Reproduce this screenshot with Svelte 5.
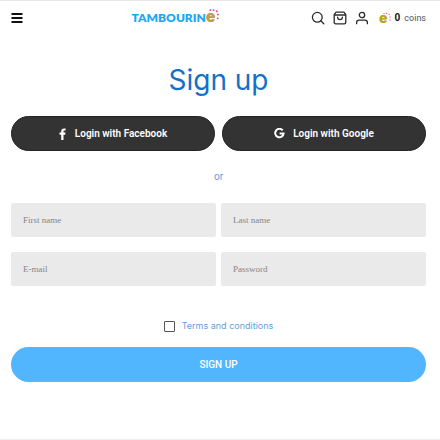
<script>
  let firstName = $state('');
  let lastName = $state('');
  let email = $state('');
  let password = $state('');
  let accepted = $state(false);
</script>

{#snippet dots()}
  <circle cx="1.4" cy="1.2" r="1" />
  <circle cx="5" cy="1.2" r="1" />
  <circle cx="8.6" cy="2.4" r="1" />
  <circle cx="9.8" cy="6" r="1" />
  <circle cx="9.6" cy="10.2" r="1" />
{/snippet}

<div class="page">
  <header>
    <button class="icon menu" aria-label="Menu">
      <svg width="12" height="12" viewBox="0 0 12 12" stroke="#111" stroke-width="2"><path d="M.5 2h11M.5 6h11M.5 10h11" /></svg>
    </button>
    <a class="logo" href="#home">
      <span>TAMBOURIN</span><span class="gold">e</span>
      <svg class="spark" width="10" height="11" viewBox="0 0 11 12" fill="#ef3e8b">{@render dots()}</svg>
    </a>
    <nav class="tools">
      <button class="icon" aria-label="Search">
        <svg width="14" height="14" viewBox="0 0 14 14" fill="none" stroke="#2b2b2b" stroke-width="1.3" stroke-linecap="round"><circle cx="6.3" cy="6.3" r="4.9" /><path d="m10 10 2.8 2.8" /></svg>
      </button>
      <button class="icon" aria-label="Bag">
        <svg width="14" height="14" viewBox="0 0 14 14" fill="none" stroke="#2b2b2b" stroke-width="1.3" stroke-linecap="round" stroke-linejoin="round"><path d="M3 1.2h8l1.8 2.4v7.6q0 1.6-1.6 1.6H2.8q-1.6 0-1.6-1.6V3.6zM1.2 4h11.6M4.6 6.2c.2 3.2 4.6 3.2 4.8 0" /></svg>
      </button>
      <button class="icon" aria-label="Account">
        <svg width="14" height="14" viewBox="0 0 14 14" fill="none" stroke="#2b2b2b" stroke-width="1.3" stroke-linecap="round"><circle cx="7" cy="4" r="2.7" /><path d="M1.6 12.7v-.9q0-2.6 2.6-2.6h5.6q2.6 0 2.6 2.6v.9" /></svg>
      </button>
      <a class="coins" href="#coins">
        <span class="coin">e<svg class="spark" width="8" height="10" viewBox="0 0 11 12" fill="#f26aa5">{@render dots()}</svg></span>
        <b>0</b><span>coins</span>
      </a>
    </nav>
  </header>

  <main>
    <h1>Sign up</h1>
    <div class="social">
      <button type="button">
        <svg width="8" height="12" viewBox="0 0 8 12" fill="#fff"><path d="M2.2 12V6.7H.5V4.6h1.7V3.2C2.2 1.3 3.3.5 5 .5c.8 0 1.6.1 1.6.1v1.8h-.9c-.9 0-1.2.5-1.2 1.1v1.1h2l-.3 2.1H4.5V12z" /></svg>
        Login with Facebook
      </button>
      <button type="button">
        <svg width="11" height="11" viewBox="0 0 11 11" fill="none" stroke="#fff" stroke-width="2"><path d="M8.7 2.4A4.2 4.2 0 1 0 9.6 5.4H5.6" /></svg>
        Login with Google
      </button>
    </div>
    <p>or</p>
    <form onsubmit={(e) => e.preventDefault()}>
      <div class="fields">
        <input type="text" placeholder="First name" aria-label="First name" bind:value={firstName} />
        <input type="text" placeholder="Last name" aria-label="Last name" bind:value={lastName} />
        <input type="email" placeholder="E-mail" aria-label="E-mail" bind:value={email} />
        <input type="password" placeholder="Password" aria-label="Password" bind:value={password} />
      </div>
      <div class="terms">
        <input id="terms" type="checkbox" bind:checked={accepted} />
        <label for="terms">Terms and conditions</label>
      </div>
      <button class="submit">SIGN UP</button>
    </form>
  </main>
</div>

<style>
  :global(body) { margin: 0; background: #fff; }
  .page {
    box-sizing: border-box;
    min-height: 100vh;
    border-top: 1px solid #e6e6e6;
    border-bottom: 1px solid #eee;
    font-family: Roboto, "Liberation Sans", sans-serif;
    font-size: 10px;
    color: #222;
  }
  button, input { font: inherit; border: 0; margin: 0; padding: 0; box-sizing: border-box; }
  button { cursor: pointer; }
  a { color: inherit; text-decoration: none; }
  svg { display: block; flex: none; }
  header { display: flex; align-items: center; justify-content: space-between; height: 33px; padding: 0 14px 0 11px; }
  .tools { display: flex; align-items: center; gap: 8px; }
  .icon { background: none; }
  .menu { padding-right: 16px; }
  .logo {
    position: relative;
    display: flex;
    align-items: baseline;
    padding-right: 3px;
    font: 800 12px/20px Lato, sans-serif;
    color: #20a7f2;
  }
  .gold { font: 900 16px/16px Inter, sans-serif; color: #b5a04b; }
  .spark { position: absolute; top: 1px; right: 0; }
  .coins { display: flex; align-items: center; gap: 4px; margin-left: 2px; font-size: 9px; line-height: 14px; color: #555; }
  .coin { position: relative; padding-right: 3px; font: 900 14px/14px Inter, sans-serif; color: #bba51f; }
  .coins b { font-size: 10px; color: #111; }
  main { padding: 0 14px 55px 11px; }
  h1 { margin: 25px 0 15px; font-family: Inter, sans-serif; font-size: 28px; line-height: 42px; font-weight: 400; text-align: center; color: #1470c8; }
  .social { display: flex; gap: 7px; }
  .social button {
    flex: 1;
    display: flex;
    align-items: center;
    justify-content: center;
    gap: 8px;
    height: 35px;
    border-radius: 18px;
    border: 1px solid #222;
    background: #333;
    color: #fff;
    font-weight: 600;
  }
  p { margin: 18px 0; line-height: 16px; text-align: center; color: #5b9fd9; }
  .fields { display: grid; grid-template-columns: 1fr 1fr; gap: 15px 5px; }
  .fields input {
    min-width: 0;
    height: 34px;
    padding: 0 12px;
    border-radius: 2px;
    background: #eaeaea;
    font-family: "Liberation Serif", serif;
    font-size: 9px;
    color: #333;
  }
  .fields input::placeholder { color: #858585; opacity: 1; }
  .terms { display: flex; align-items: center; justify-content: center; gap: 7px; margin: 32px 0 13px; line-height: 16px; color: #5b9fd9; }
  .terms input { appearance: none; width: 11px; height: 11px; border: 1px solid #555; border-radius: 1px; background: #fff; }
  .terms input:checked { background: #50b5ff; }
  .terms label { font-family: Inter, sans-serif; font-size: 9px; }
  .submit { width: 100%; height: 35px; border-radius: 18px; background: #52b6ff; color: #fff; font-weight: 500; }
</style>
